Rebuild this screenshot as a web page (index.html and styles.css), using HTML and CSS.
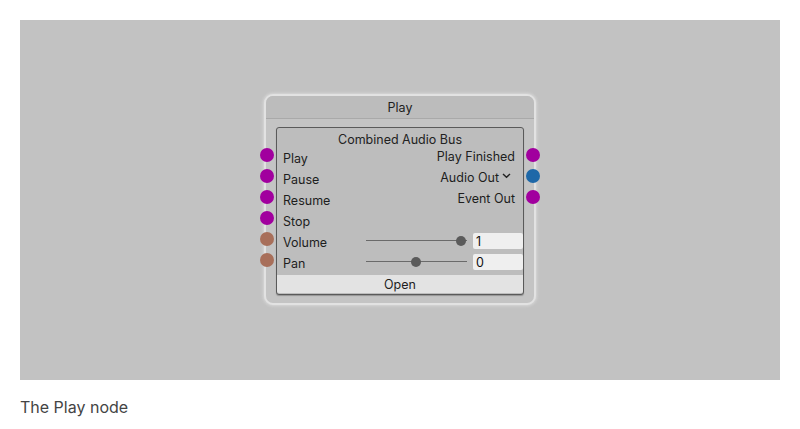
FILE: index.html
```html
<!DOCTYPE html>
<html>
<head>
<meta charset="utf-8">
<link rel="stylesheet" href="styles.css">
</head>
<body>
<div class="page">
  <div class="canvas">
    <div class="node">
      <div class="node-header">Play</div>
      <div class="node-body">
        <div class="inner">
          <div class="inner-title">Combined Audio Bus</div>
          <div class="row">
            <span class="port port-left magenta"></span>
            <span class="label">Play</span>
            <span class="out">Play Finished</span>
            <span class="port port-right magenta"></span>
          </div>
          <div class="row">
            <span class="port port-left magenta"></span>
            <span class="label">Pause</span>
            <span class="out out-chev">Audio Out<svg class="chev" width="9" height="6" viewBox="0 0 9 6"><path d="M1 1 L4.5 4.3 L8 1" fill="none" stroke="#222" stroke-width="1.4"/></svg></span>
            <span class="port port-right blue"></span>
          </div>
          <div class="row">
            <span class="port port-left magenta"></span>
            <span class="label">Resume</span>
            <span class="out">Event Out</span>
            <span class="port port-right magenta"></span>
          </div>
          <div class="row">
            <span class="port port-left magenta"></span>
            <span class="label">Stop</span>
          </div>
          <div class="row">
            <span class="port port-left brown"></span>
            <span class="label">Volume</span>
            <div class="slider"><div class="track"></div><span class="knob" style="left: 95px"></span></div>
            <div class="field">1</div>
          </div>
          <div class="row">
            <span class="port port-left brown"></span>
            <span class="label">Pan</span>
            <div class="slider"><div class="track"></div><span class="knob" style="left: 50px"></span></div>
            <div class="field">0</div>
          </div>
          <div class="open">Open</div>
        </div>
      </div>
    </div>
  </div>
  <div class="caption">The Play node</div>
</div>
</body>
</html>
```
FILE: styles.css
```css
html, body {
  margin: 0;
  padding: 0;
  background: #ffffff;
}
.page {
  padding: 20px 20px 0 20px;
  font-family: Inter, "Noto Sans", sans-serif;
}
.canvas {
  width: 760px;
  height: 360px;
  background: #c2c2c2;
  display: flex;
  align-items: center;
  justify-content: center;
}
.node {
  width: 268px;
  height: 207px;
  margin-top: -1px;
  border: 2px solid #e2e2e2;
  border-radius: 9px;
  background: #c4c4c4;
  box-shadow: 0 0 3px 1px #d8d8d8;
  display: flex;
  flex-direction: column;
  overflow: visible;
}
.node-header {
  height: 22px;
  line-height: 23px;
  background: #bcbcbc;
  border-bottom: 1px solid #a9a9a9;
  border-radius: 7px 7px 0 0;
  text-align: center;
  font-size: 12.5px;
  color: #1e1e1e;
}
.node-body {
  padding: 8px 10px 0 10px;
}
.inner {
  border: 1px solid #5a5a5a;
  border-radius: 3px;
  background: #bdbdbd;
  height: 168px;
  box-sizing: border-box;
  display: flex;
  flex-direction: column;
  box-shadow: 0 1px 1px rgba(0,0,0,0.25);
}
.inner-title {
  text-align: center;
  font-size: 12.5px;
  color: #222;
  height: 18px;
  line-height: 24px;
}
.row {
  position: relative;
  height: 21px;
  display: flex;
  align-items: center;
  padding: 0 8px 0 6px;
  font-size: 12.5px;
  color: #1e1e1e;
}
.label {
  flex: 1;
  padding-top: 3px;
}
.out {
  display: flex;
  align-items: center;
  gap: 3px;
}
.out-chev {
  margin-right: 4px;
}
.chev {
  margin-top: -3px;
}
.port {
  position: absolute;
  width: 14px;
  height: 14px;
  border-radius: 50%;
  top: 2px;
}
.port-left { left: -17px; }
.port-right { right: -17px; }
.magenta { background: #a1009e; }
.blue { background: #1e68a8; }
.brown { background: #a86f5a; }
.slider {
  position: relative;
  width: 101px;
  height: 10px;
  margin-right: 6px;
}
.track {
  position: absolute;
  left: 0;
  right: 0;
  top: 4px;
  height: 1px;
  background: #6a6a6a;
}
.knob {
  position: absolute;
  top: 0;
  width: 10px;
  height: 10px;
  margin-left: -5px;
  border-radius: 50%;
  background: #5b5b5b;
}
.field {
  width: 50px;
  height: 16px;
  background: #efefef;
  border-radius: 2px;
  margin-right: -8px;
  padding-left: 3px;
  box-sizing: border-box;
  font-size: 12.5px;
  line-height: 18px;
  color: #111;
}
.open {
  margin-top: auto;
  height: 18px;
  background: #e3e3e3;
  text-align: center;
  font-size: 12.5px;
  line-height: 19px;
  color: #1e1e1e;
  border-radius: 0 0 2px 2px;
  margin-bottom: 1px;
}
.caption {
  margin-top: 17px;
  font-size: 16px;
  color: #444444;
}
```
